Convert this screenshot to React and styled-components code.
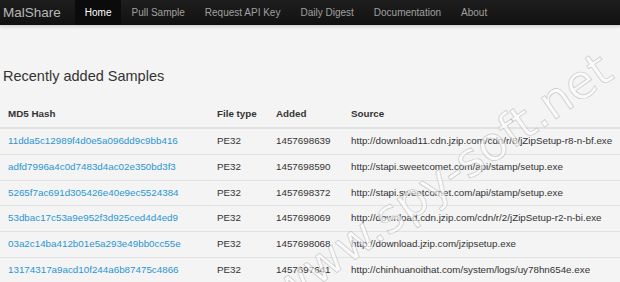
import React from 'react'
import styled, { createGlobalStyle } from 'styled-components'

const GlobalStyle = createGlobalStyle`
  html, body {
    margin: 0;
    padding: 0;
    background: #f4f4f4;
    font-family: "Liberation Sans", Arial, sans-serif;
    color: #333;
  }
`

const Page = styled.div`
  position: relative;
  width: 620px;
  height: 282px;
  overflow: hidden;
`

const Navbar = styled.nav`
  display: flex;
  align-items: stretch;
  height: 25px;
  background: linear-gradient(#1e1e1e, #111);
  border-bottom: 1px solid #d8d8d8;
  box-shadow: 0 1px 3px rgba(0, 0, 0, 0.12);
`

const Brand = styled.a`
  display: flex;
  align-items: center;
  padding: 0 14px 0 3px;
  font-size: 13.5px;
  color: #b8b8b8;
  text-decoration: none;
`

const NavItem = styled.a`
  display: flex;
  align-items: center;
  padding: 0 10px;
  font-size: 10px;
  color: ${p => (p.$active ? '#fff' : '#a0a0a0')};
  background: ${p => (p.$active ? '#0b0b0b' : 'transparent')};
  text-decoration: none;
`

const Heading = styled.h3`
  margin: 41px 0 16px 3px;
  font-size: 14.5px;
  font-weight: normal;
  line-height: 18px;
  color: #333;
`

const Table = styled.table`
  width: 100%;
  table-layout: fixed;
  border-collapse: collapse;
  font-size: 9.8px;
`

const Th = styled.th`
  box-sizing: border-box;
  text-align: left;
  font-weight: bold;
  padding: 6px 8px 5px;
  line-height: 14.7px;
  white-space: nowrap;
  border-bottom: 2px solid #e2e2e2;
  width: ${p => p.$w || 'auto'};
`

const Td = styled.td`
  padding: 5px 8px;
  line-height: 14.9px;
  border-bottom: 1px solid #e2e2e2;
  white-space: nowrap;
  overflow: hidden;
`

const HashLink = styled.a`
  color: #2a95d2;
  text-decoration: none;
`

// faint diagonal watermark over the table
const Watermark = styled.div`
  position: absolute;
  left: 262px;
  top: 276px;
  font-size: 47px;
  line-height: 1;
  font-family: "DejaVu Sans", Verdana, sans-serif;
  color: rgba(255, 255, 255, 0.6);
  -webkit-text-stroke: 0.7px rgba(150, 150, 150, 0.5);
  transform: rotate(-35deg);
  transform-origin: 0 0;
  white-space: nowrap;
  pointer-events: none;
`

const navLinks = ['Pull Sample', 'Request API Key', 'Daily Digest', 'Documentation', 'About']

const samples = [
  ['11dda5c12989f4d0e5a096dd9c9bb416', '1457698639', 'http://download11.cdn.jzip.com/cdn/r/8/jZipSetup-r8-n-bf.exe'],
  ['adfd7996a4c0d7483d4ac02e350bd3f3', '1457698590', 'http://stapi.sweetcomet.com/api/stamp/setup.exe'],
  ['5265f7ac691d305426e40e9ec5524384', '1457698372', 'http://stapi.sweetcomet.com/api/stamp/setup.exe'],
  ['53dbac17c53a9e952f3d925ced4d4ed9', '1457698069', 'http://download.cdn.jzip.com/cdn/r/2/jZipSetup-r2-n-bi.exe'],
  ['03a2c14ba412b01e5a293e49bb0cc55e', '1457698068', 'http://download.jzip.com/jzipsetup.exe'],
  ['13174317a9acd10f244a6b87475c4866', '1457697641', 'http://chinhuanoithat.com/system/logs/uy78hn654e.exe'],
]

const App = () => (
  <Page>
    <GlobalStyle />
    <Navbar>
      <Brand href="#">MalShare</Brand>
      <NavItem href="#" $active>Home</NavItem>
      {navLinks.map(l => (
        <NavItem href="#" key={l}>{l}</NavItem>
      ))}
    </Navbar>
    <Heading>Recently added Samples</Heading>
    <Table>
      <thead>
        <tr>
          <Th $w="209px">MD5 Hash</Th>
          <Th $w="59px">File type</Th>
          <Th $w="75px">Added</Th>
          <Th>Source</Th>
        </tr>
      </thead>
      <tbody>
        {samples.map(([hash, added, src]) => (
          <tr key={hash}>
            <Td><HashLink href="#">{hash}</HashLink></Td>
            <Td>PE32</Td>
            <Td>{added}</Td>
            <Td>{src}</Td>
          </tr>
        ))}
      </tbody>
    </Table>
    <Watermark>www.spy-soft.net</Watermark>
  </Page>
)

export default App
